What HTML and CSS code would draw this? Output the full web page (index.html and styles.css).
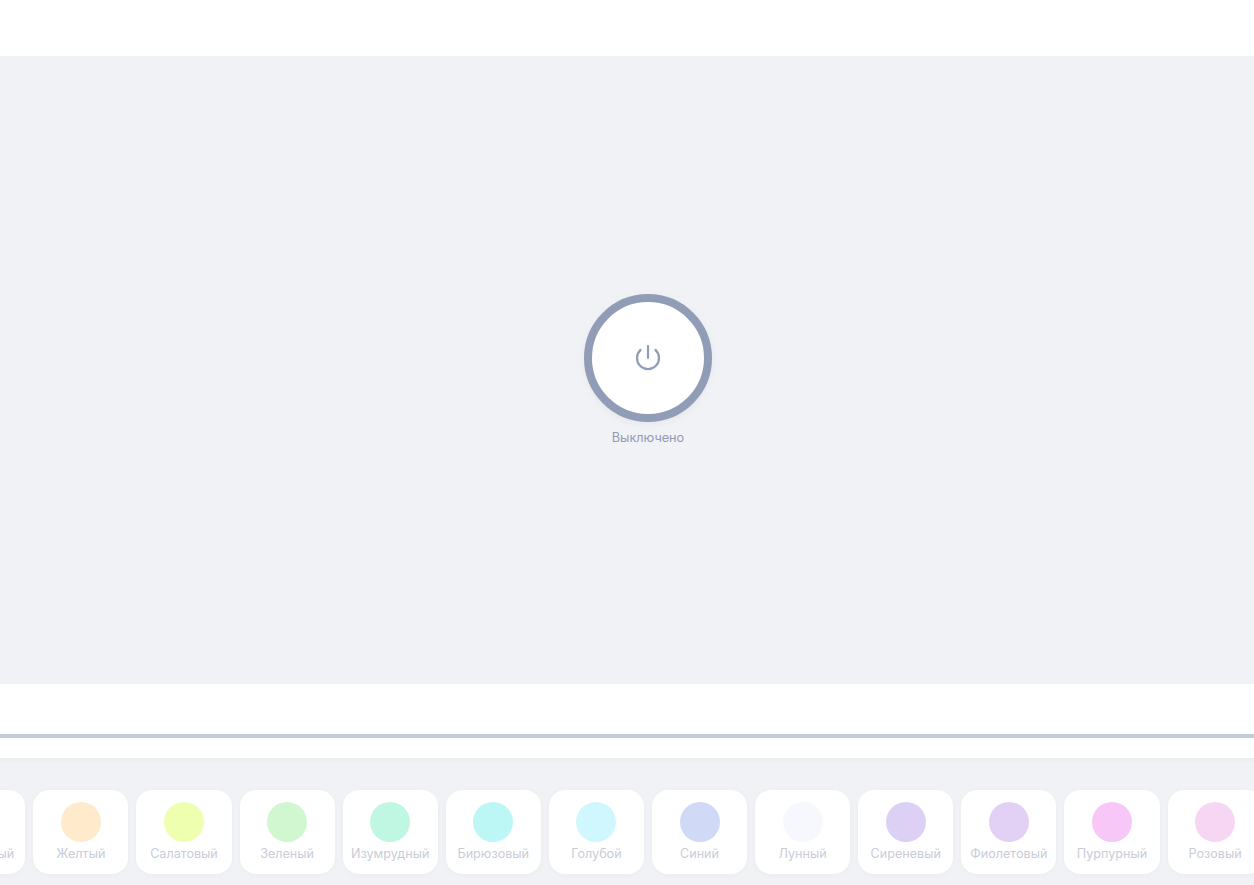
FILE: index.html
```html
<!DOCTYPE html>
<html lang="ru">
<head>
  <meta charset="UTF-8">
  <meta name="viewport" content="width=device-width, initial-scale=1.0">
  <title>Лампа</title>
  <link rel="stylesheet" href="styles.css">
</head>
<body>
  <header class="topbar"></header>

  <main class="stage">
    <button class="power" type="button" aria-label="Включить">
      <svg class="power-icon" width="26" height="26" viewBox="0 0 26 26" fill="none">
        <path d="M13 1V13"/>
        <path d="M5.6 4.9A11 11 0 1 0 20.4 4.9"/>
      </svg>
    </button>
    <div class="power-label">Выключено</div>
  </main>

  <section class="slider-panel">
    <div class="slider-line"></div>
  </section>

  <section class="colors">
    <div class="color-track">
      <div class="color-card"><span class="dot dot-orange"></span><span class="color-name">Оранжевый</span></div>
      <div class="color-card"><span class="dot dot-yellow"></span><span class="color-name">Желтый</span></div>
      <div class="color-card"><span class="dot dot-lime"></span><span class="color-name">Салатовый</span></div>
      <div class="color-card"><span class="dot dot-green"></span><span class="color-name">Зеленый</span></div>
      <div class="color-card"><span class="dot dot-emerald"></span><span class="color-name">Изумрудный</span></div>
      <div class="color-card"><span class="dot dot-turquoise"></span><span class="color-name">Бирюзовый</span></div>
      <div class="color-card"><span class="dot dot-sky"></span><span class="color-name">Голубой</span></div>
      <div class="color-card"><span class="dot dot-blue"></span><span class="color-name">Синий</span></div>
      <div class="color-card"><span class="dot dot-moon"></span><span class="color-name">Лунный</span></div>
      <div class="color-card"><span class="dot dot-lilac"></span><span class="color-name">Сиреневый</span></div>
      <div class="color-card"><span class="dot dot-violet"></span><span class="color-name">Фиолетовый</span></div>
      <div class="color-card"><span class="dot dot-purple"></span><span class="color-name">Пурпурный</span></div>
      <div class="color-card"><span class="dot dot-pink"></span><span class="color-name">Розовый</span></div>
    </div>
  </section>
</body>
</html>
```

FILE: styles.css
```css
html, body {
  height: 100%;
}

body {
  margin: 0;
  display: flex;
  flex-direction: column;
  overflow: hidden;
  background-color: #f1f2f5;
  font-family: "Inter", "Noto Sans", sans-serif;
}

.topbar {
  flex: 0 0 56px;
  background-color: #fff;
}

.stage {
  flex: 0 0 628px;
  box-sizing: border-box;
  padding: 0 0 2px 42px;
  display: flex;
  flex-direction: column;
  align-items: center;
  justify-content: center;
}

.power {
  box-sizing: border-box;
  width: 128px;
  height: 128px;
  padding: 0;
  display: flex;
  align-items: center;
  justify-content: center;
  background-color: #fff;
  border: 8px solid #919db6;
  border-radius: 50%;
  box-shadow: 0 2px 6px rgba(143, 156, 182, 0.12);
}

.power-icon path {
  stroke: #919db6;
  stroke-width: 2.2;
  stroke-linecap: round;
}

.power-label {
  margin-top: 8px;
  font-size: 12.7px;
  line-height: 15px;
  color: #919bb4;
}

.slider-panel {
  flex: 0 0 74px;
  box-sizing: border-box;
  padding-top: 50px;
  background-color: #fff;
  box-shadow: 0 2px 4px rgba(143, 156, 182, 0.08);
}

.slider-line {
  height: 4px;
  background-color: #c6cbd9;
}

.colors {
  padding-top: 32px;
}

.color-track {
  display: flex;
  gap: 8px;
  margin-left: -69.82px;
}

.color-card {
  flex: 0 0 95.12px;
  box-sizing: border-box;
  height: 84px;
  padding-top: 12px;
  display: flex;
  flex-direction: column;
  align-items: center;
  background-color: #fff;
  border-radius: 16px;
  box-shadow: 0 1px 4px rgba(143, 156, 182, 0.07);
}

.dot {
  flex: none;
  width: 40px;
  height: 40px;
  border-radius: 50%;
}

.dot-orange { background-color: #ffdcc4; }
.dot-yellow { background-color: #ffebcb; }
.dot-lime { background-color: #eeffb0; }
.dot-green { background-color: #d0f7d0; }
.dot-emerald { background-color: #c0f7e3; }
.dot-turquoise { background-color: #bcf7f5; }
.dot-sky { background-color: #d0f7fe; }
.dot-blue { background-color: #d0daf7; }
.dot-moon { background-color: #f7f8fe; }
.dot-lilac { background-color: #dcd0f5; }
.dot-violet { background-color: #e3d0f5; }
.dot-purple { background-color: #f7c7f7; }
.dot-pink { background-color: #f7d6f3; }

.color-name {
  margin-top: 4px;
  font-size: 12.6px;
  line-height: 15px;
  color: #c9ccd7;
  white-space: nowrap;
}
```
